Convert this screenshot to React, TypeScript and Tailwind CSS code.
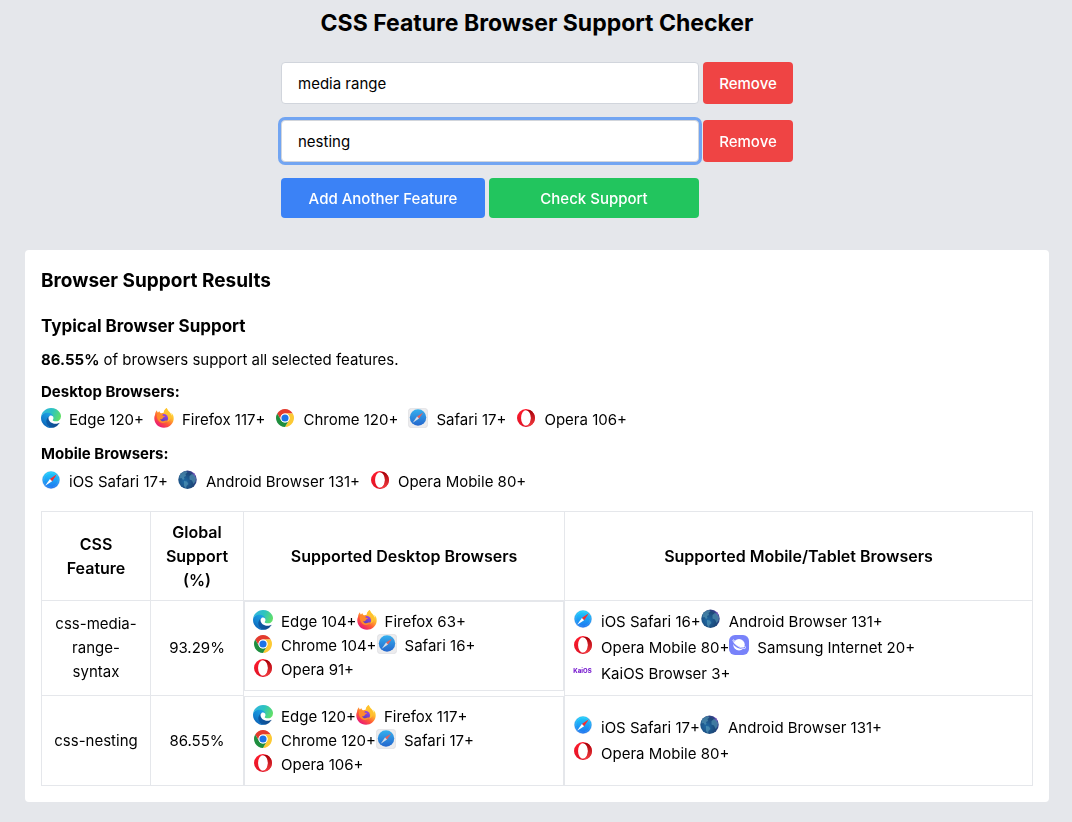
import { useState } from "react";

type BrowserId =
  | "edge"
  | "firefox"
  | "chrome"
  | "safari"
  | "opera"
  | "iosSafari"
  | "android"
  | "samsung"
  | "kaios";

interface IBrowser {
  id: BrowserId;
  label: string;
}

interface IResult {
  feature: string;
  support: string;
  desktop: IBrowser[];
  mobile: IBrowser[];
}

const typicalDesktop: IBrowser[] = [
  { id: "edge", label: "Edge 120+" },
  { id: "firefox", label: "Firefox 117+" },
  { id: "chrome", label: "Chrome 120+" },
  { id: "safari", label: "Safari 17+" },
  { id: "opera", label: "Opera 106+" },
];

const typicalMobile: IBrowser[] = [
  { id: "iosSafari", label: "iOS Safari 17+" },
  { id: "android", label: "Android Browser 131+" },
  { id: "opera", label: "Opera Mobile 80+" },
];

const results: IResult[] = [
  {
    feature: "css-media-range-syntax",
    support: "93.29%",
    desktop: [
      { id: "edge", label: "Edge 104+" },
      { id: "firefox", label: "Firefox 63+" },
      { id: "chrome", label: "Chrome 104+" },
      { id: "safari", label: "Safari 16+" },
      { id: "opera", label: "Opera 91+" },
    ],
    mobile: [
      { id: "iosSafari", label: "iOS Safari 16+" },
      { id: "android", label: "Android Browser 131+" },
      { id: "opera", label: "Opera Mobile 80+" },
      { id: "samsung", label: "Samsung Internet 20+" },
      { id: "kaios", label: "KaiOS Browser 3+" },
    ],
  },
  {
    feature: "css-nesting",
    support: "86.55%",
    desktop: typicalDesktop,
    mobile: typicalMobile,
  },
];

// Gradients shared by every icon on the page
function IconDefs() {
  return (
    <svg className="absolute size-0" aria-hidden="true">
      <defs>
        <linearGradient id="edge-dark" x1="0.2" y1="0.5" x2="1" y2="0.6">
          <stop offset="0" stopColor="#0c59a4" />
          <stop offset="1" stopColor="#114a8b" />
        </linearGradient>
        <linearGradient id="edge-blue" x1="0.7" y1="0.2" x2="0.2" y2="1">
          <stop offset="0" stopColor="#1b9de2" />
          <stop offset="0.5" stopColor="#1383d0" />
          <stop offset="1" stopColor="#0a5ab0" />
        </linearGradient>
        <linearGradient id="edge-green" x1="0" y1="0.3" x2="1" y2="0.6">
          <stop offset="0" stopColor="#32b5e0" />
          <stop offset="0.5" stopColor="#2dc3c0" />
          <stop offset="1" stopColor="#62e065" />
        </linearGradient>
        <linearGradient id="fox-body" x1="0.85" y1="0.05" x2="0.2" y2="0.95">
          <stop offset="0" stopColor="#fff04a" />
          <stop offset="0.35" stopColor="#ffb52e" />
          <stop offset="0.65" stopColor="#ff5a36" />
          <stop offset="1" stopColor="#e8127c" />
        </linearGradient>
        <linearGradient id="fox-globe" x1="0.8" y1="0" x2="0.3" y2="1">
          <stop offset="0" stopColor="#a044e8" />
          <stop offset="1" stopColor="#5140b8" />
        </linearGradient>
        <linearGradient id="safari-blue" x1="0" y1="0" x2="0" y2="1">
          <stop offset="0" stopColor="#35b0ee" />
          <stop offset="1" stopColor="#2466cd" />
        </linearGradient>
        <linearGradient id="ios-blue" x1="0" y1="0" x2="0" y2="1">
          <stop offset="0" stopColor="#1fd0fb" />
          <stop offset="1" stopColor="#1c72f0" />
        </linearGradient>
        <linearGradient id="opera-ring" x1="0" y1="0" x2="0" y2="1">
          <stop offset="0" stopColor="#ff1b2d" />
          <stop offset="1" stopColor="#e01426" />
        </linearGradient>
        <linearGradient id="opera-side" x1="0" y1="0" x2="0" y2="1">
          <stop offset="0" stopColor="#a30008" />
          <stop offset="1" stopColor="#f53c40" />
        </linearGradient>
        <radialGradient id="globe-sea" cx="0.35" cy="0.6" r="0.75">
          <stop offset="0" stopColor="#1f6ba5" />
          <stop offset="0.65" stopColor="#1c4778" />
          <stop offset="1" stopColor="#4a3c98" />
        </radialGradient>
      </defs>
    </svg>
  );
}

function EdgeIcon() {
  return (
    <svg viewBox="0 0 256 256" className="size-5">
      <path
        fill="url(#edge-dark)"
        d="M231 190.5c-3.4 1.8-6.9 3.4-10.5 4.7a101.8 101.8 0 0 1-35.9 6.5c-47.3 0-88.5-32.5-88.5-74.3 0-11.4 6.4-21.9 16.4-27.4-42.8 1.8-53.8 46.4-53.8 72.5 0 73.9 68.1 81.4 82.8 81.4 7.9 0 19.8-2.3 27-4.6l1.3-.4a128.3 128.3 0 0 0 66.6-52.8 4 4 0 0 0-5.4-5.6z"
      />
      <path
        fill="url(#edge-blue)"
        d="M105.7 241.4a79.2 79.2 0 0 1-22.7-21.3 80.7 80.7 0 0 1 29.5-120c3.2-1.5 8.5-4.1 15.6-4a32.4 32.4 0 0 1 25.7 13 31.9 31.9 0 0 1 6.3 18.7c0-.2 24.5-79.6-80-79.6-43.9 0-80 41.7-80 78.2 0 19.3 4 38.6 12.4 56a128 128 0 0 0 156.4 67.2 75.5 75.5 0 0 1-62.8-8.2z"
      />
      <path
        fill="url(#edge-green)"
        d="M152.3 148.9c-.9 1-3.4 2.5-3.4 5.6 0 2.6 1.7 5.1 4.7 7.2 14.4 10 41.5 8.7 41.5 8.7a59.6 59.6 0 0 0 30.3-8.3A61.4 61.4 0 0 0 256 109c.3-22.5-8-37.5-11.4-44C223.5 23.7 177.8 0 128 0 58 0 1 56.2 0 126.5.5 90 36.8 60.5 80 60.5c3.5 0 23.5.3 42 10.1 16.3 8.6 24.9 18.9 30.8 29.2 6.2 10.7 7.3 24.1 7.3 29.5 0 5.3-2.7 13.3-7.8 19.6z"
      />
    </svg>
  );
}

function FirefoxIcon() {
  return (
    <svg viewBox="0 0 40 40" className="size-5">
      <path
        fill="url(#fox-body)"
        d="M38.2 14.5c-.9-2.2-2.7-4.5-4.1-5.2 1.1 2.2 1.8 4.4 2 6C33.8 9.6 29.9 7.3 26.7 2.3L25.5 0c-4.3 2.5-5.9 6.9-6.2 9.3-1.9.1-3.8.6-5.5 1.5-1.4-1-2.3-2.5-2.9-4.5-1.1.6-2.1 1.6-2.9 2.6-1-.4-2-2.4-2-4.6-2.6 2.3-3.9 6-3.9 9.5C.9 15.9.5 19 .6 21.600 1 31.8 9.4 39.7 20 39.7c9.6 0 17.7-7 19.2-16 .5-3.200.2-6.500-1-9.200z"
      />
      <circle cx="19.5" cy="20.5" r="8.5" fill="url(#fox-globe)" />
      <path
        fill="#ff8a2b"
        d="M6 13c3-3 7-3.5 9.5-1.5 1.2-.6 2.8-.8 4-.6-1.5.8-2.6 2-2.8 3.400 1.5 1.5 4.3 1.2 5.2 1.7-.2 2-3.4 2.5-4.3 4-.4 2.5-3.6 3-5.6 2 1.5 4.5 6.5 5.6 10 3.6 2-1.1 3.4-1 4.4 0 .6 1-.4 2-1.4 2.6-4.5 3-11.5 2.5-15.5-2.2C6 22 5 17 6 13z"
      />
      <path
        fill="#ffc12e"
        d="M25.5 0c-4 2.5-5.5 6.5-5.8 9.5 5 .3 9.3 4.5 9.3 10.5 0 3-1.3 5.5-3.5 7.5 5-1 8.5-5.5 8.5-11 0-6.500-6.500-9-8.500-16.500z"
      />
    </svg>
  );
}

function ChromeIcon() {
  return (
    <svg viewBox="0 0 48 48" className="size-5 p-px">
      <circle cx="24" cy="24" r="22" fill="#fff" />
      <path fill="#e33b2e" d="M24 12h20.78A24 24 0 0 0 3.22 12L13.6 30A12 12 0 0 1 24 12z" />
      <path fill="#fcc934" d="M44.78 12A24 24 0 0 1 24 48l10.4-18A12 12 0 0 0 24 12z" />
      <path fill="#1e8e3e" d="M3.22 12A24 24 0 0 0 24 48l10.4-18a12 12 0 0 1-20.8 0z" />
      <circle cx="24" cy="24" r="12" fill="#fff" />
      <circle cx="24" cy="24" r="9.5" fill="#1a73e8" />
    </svg>
  );
}

function SafariIcon() {
  return (
    <svg viewBox="0 0 40 40" className="size-5">
      <rect x="0.5" y="0.5" width="39" height="39" rx="7" fill="#ececee" stroke="#d4d4d8" />
      <circle cx="20" cy="19" r="16.5" fill="url(#safari-blue)" />
      <path fill="#e5605a" d="M30.5 9 18 17l4 4z" />
      <path fill="#d5dde8" d="M9.5 29.500 18 17l4 4z" />
    </svg>
  );
}

function IosSafariIcon() {
  return (
    <svg viewBox="0 0 40 40" className="size-5 p-px">
      <circle cx="20" cy="20" r="20" fill="#b9d3ec" />
      <circle cx="20" cy="20" r="18.8" fill="url(#ios-blue)" />
      <circle
        cx="20"
        cy="20"
        r="16"
        fill="none"
        stroke="#fff"
        strokeOpacity="0.4"
        strokeWidth="2"
        strokeDasharray="0.8 2"
      />
      <path fill="#fb2b2b" d="M33 7 17.5 17.5l5 5z" />
      <path fill="#fff" d="M7 33l10.500-15.500 5 5z" />
    </svg>
  );
}

function OperaIcon() {
  return (
    <svg viewBox="0 0 40 40" className="size-5 p-px">
      <path
        fill="url(#opera-ring)"
        fillRule="evenodd"
        d="M20 0a20 20 0 1 0 0 40 20 20 0 0 0 0-40zm0 3a11 17 0 1 1 0 34 11 17 0 0 1 0-34z"
      />
      <path
        fill="url(#opera-side)"
        d="M20 3a11 17 0 0 1 0 34c5 1.500 10 .2 13.300-2.100a20 20 0 0 0 0-29.800C30 2.300 25 1.500 20 3z"
      />
    </svg>
  );
}

function AndroidIcon() {
  return (
    <svg viewBox="0 0 40 40" className="size-5">
      <circle cx="19" cy="19.500" r="18.500" fill="url(#globe-sea)" />
      <g fill="#5fa3bd" fillOpacity="0.55">
        <path d="M3 11c3-5 8-8 13-9l3 3-4 3 1 4-4 2 1 4-3 2-3-4-4 1z" />
        <path d="M12 22l6 1 3 5-4 4-1 5-4-5z" />
        <path d="M23 12l5-4 5 2 3 6-1 7-4 5-3-7-5-2z" />
      </g>
      <path fill="#8f5bd0" fillOpacity="0.6" d="M27 3a19 19 0 0 1 9 10l-4-2z" />
    </svg>
  );
}

function SamsungIcon() {
  return (
    <svg viewBox="0 0 40 40" className="size-5">
      <rect width="40" height="40" rx="12" fill="#7882fa" />
      <circle cx="20" cy="19.5" r="11.5" fill="#fff" />
      <path fill="#7882fa" d="M8 13c6 9 15 13 25 12l-1 3c-11 1-19-3-25-11z" />
      <path
        fill="none"
        stroke="#fff"
        strokeWidth="1.6"
        d="M11.5 11.500C8 8.500 7 9.500 8.500 12.500c4 8 17 15.500 23 14.500 2.500-.5 1.500-3-.5-5"
      />
    </svg>
  );
}

function KaiosIcon() {
  return (
    <svg viewBox="0 0 20 20" className="size-5" aria-hidden="true">
      <text
        x="9.5"
        y="12"
        textAnchor="middle"
        fill="#7a1fd0"
        fontFamily="Inter, sans-serif"
        fontSize="6"
        fontWeight="800"
      >
        KaiOS
      </text>
    </svg>
  );
}

const icons: Record<BrowserId, () => React.JSX.Element> = {
  edge: EdgeIcon,
  firefox: FirefoxIcon,
  chrome: ChromeIcon,
  safari: SafariIcon,
  opera: OperaIcon,
  iosSafari: IosSafariIcon,
  android: AndroidIcon,
  samsung: SamsungIcon,
  kaios: KaiosIcon,
};

function BrowserItem({ id, label }: IBrowser) {
  const Icon = icons[id];
  return (
    <span className="inline-flex items-start gap-2 whitespace-nowrap">
      <Icon />
      <span>{label}</span>
    </span>
  );
}

export default function App() {
  const [features, setFeatures] = useState(["media range", "nesting"]);

  const updateFeature = (index: number, value: string) => {
    setFeatures(features.map((f, i) => (i === index ? value : f)));
  };

  const removeFeature = (index: number) => {
    setFeatures(features.filter((_, i) => i !== index));
  };

  return (
    <div className="min-h-screen bg-[#e5e7eb] pt-[7px] pr-[23px] pb-5 pl-[25px] font-[Inter,'Liberation_Sans',sans-serif] text-[15px] leading-6 text-black">
      <IconDefs />
      <h1 className="text-center text-[23px] leading-8 font-bold">
        CSS Feature Browser Support Checker
      </h1>

      <form
        className="mx-auto mt-[23px] flex max-w-lg flex-col gap-4"
        onSubmit={(e) => e.preventDefault()}
      >
        {features.map((feature, i) => (
          <div key={i} className="flex gap-1">
            <input
              type="text"
              aria-label={`CSS feature ${i + 1}`}
              className="min-w-0 flex-1 rounded border border-gray-300 bg-white px-4 pt-[9px] pb-[7px] outline-none focus:ring-3 focus:ring-[#72a5f2]"
              value={feature}
              autoFocus={i === 1}
              onChange={(e) => updateFeature(i, e.target.value)}
            />
            <button
              type="button"
              className="w-[90px] rounded bg-[#ef4444] pt-[9px] pb-[7px] font-medium text-white"
              onClick={() => removeFeature(i)}
            >
              Remove
            </button>
          </div>
        ))}
        <div className="mr-[94px] flex gap-1">
          <button
            type="button"
            className="w-[204px] rounded bg-[#3b82f6] pt-[9px] pb-[7px] font-medium text-white"
            onClick={() => setFeatures([...features, ""])}
          >
            Add Another Feature
          </button>
          <button
            type="submit"
            className="flex-1 rounded bg-[#22c55e] pt-[9px] pb-[7px] font-medium text-white"
          >
            Check Support
          </button>
        </div>
      </form>

      <section className="mx-auto mt-8 max-w-5xl rounded bg-white p-4">
        <h2 className="text-[19px] leading-[30px] font-bold">Browser Support Results</h2>
        <h3 className="mt-4 text-[17px] leading-7 font-bold">Typical Browser Support</h3>
        <p className="mt-2">
          <strong className="font-bold">86.55%</strong> of browsers support all selected features.
        </p>

        <h4 className="mt-2 font-bold">Desktop Browsers:</h4>
        <div className="mt-1 flex flex-wrap gap-x-2.5">
          {typicalDesktop.map((browser) => (
            <BrowserItem key={browser.id} {...browser} />
          ))}
        </div>

        <h4 className="mt-2.5 font-bold">Mobile Browsers:</h4>
        <div className="mt-1 flex flex-wrap gap-x-2.5">
          {typicalMobile.map((browser) => (
            <BrowserItem key={browser.id} {...browser} />
          ))}
        </div>

        <table className="mt-[17px] w-full table-fixed border-collapse">
          <thead className="text-base">
            <tr>
              <th className="w-[11%] border border-[#e5e7eb] p-2 font-semibold">CSS Feature</th>
              <th className="w-[93px] border border-[#e5e7eb] p-2 font-semibold">
                Global Support (%)
              </th>
              <th className="w-[321px] border border-[#e5e7eb] p-2 font-semibold">
                Supported Desktop Browsers
              </th>
              <th className="border border-[#e5e7eb] p-2 font-semibold">
                Supported Mobile/Tablet Browsers
              </th>
            </tr>
          </thead>
          <tbody>
            {results.map((result) => (
              <tr key={result.feature}>
                <td className="border border-[#e5e7eb] p-2 text-center">{result.feature}</td>
                <td className="border border-[#e5e7eb] p-2 text-center">{result.support}</td>
                <td className="flex flex-wrap border border-[#e5e7eb] p-2">
                  {result.desktop.map((browser) => (
                    <BrowserItem key={browser.id} {...browser} />
                  ))}
                </td>
                <td className="border border-[#e5e7eb] p-2 leading-[26px]">
                  <div className="flex flex-wrap">
                    {result.mobile.map((browser) => (
                      <BrowserItem key={browser.id} {...browser} />
                    ))}
                  </div>
                </td>
              </tr>
            ))}
          </tbody>
        </table>
      </section>
    </div>
  );
}
